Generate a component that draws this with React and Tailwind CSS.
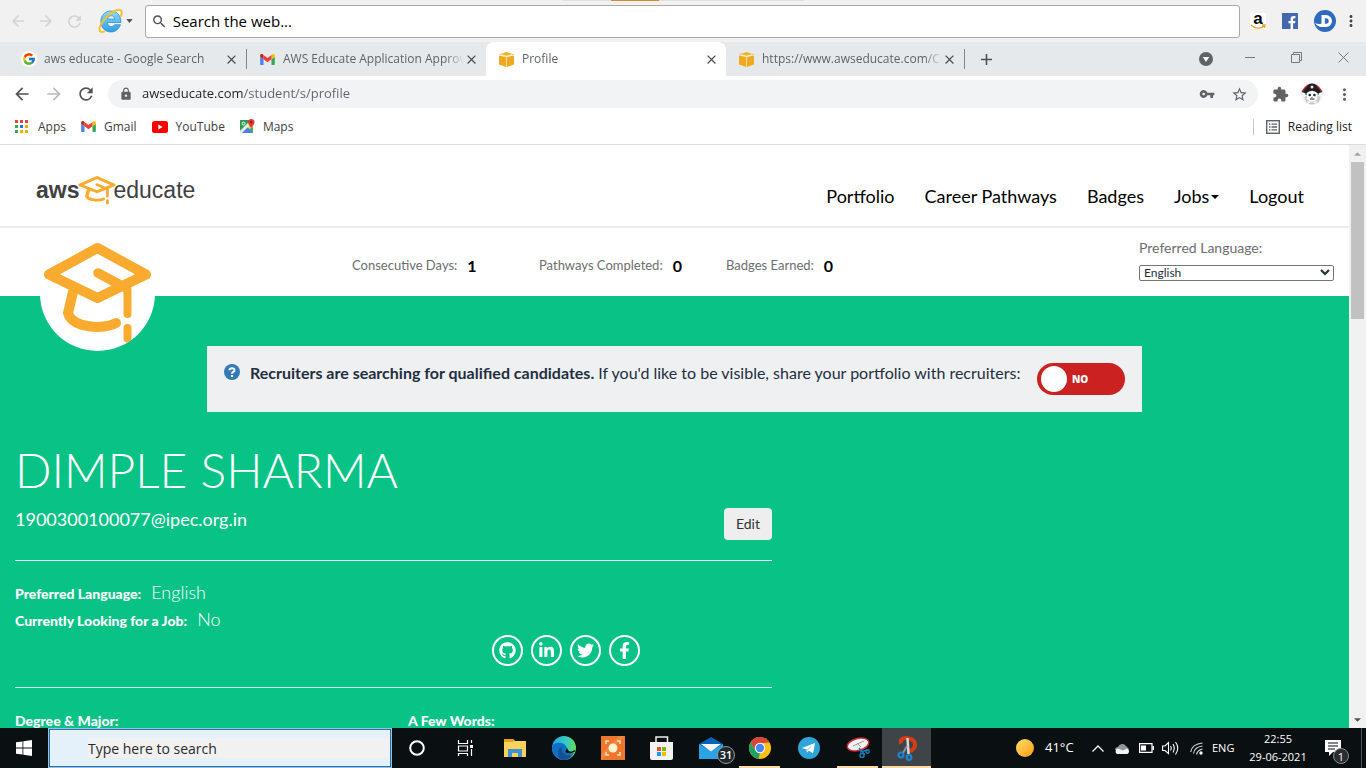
import React from "react";
import { FcGoogle } from "react-icons/fc";
import { FaGithub, FaLinkedinIn, FaTwitter, FaFacebookF } from "react-icons/fa";
import {
  MdArrowBack, MdArrowForward, MdRefresh, MdLock, MdVpnKey, MdStarBorder,
  MdExtension, MdMoreVert, MdSearch, MdClose, MdAdd,
} from "react-icons/md";

const UI = "font-['Open_Sans','Noto_Sans',sans-serif]";
const LATO = "font-['Lato',sans-serif]";

function CapIcon({ className }) {
  return (
    <svg viewBox="0 0 115 115" preserveAspectRatio="none" className={className} fill="none" stroke="#f9ab30" strokeLinecap="round" strokeLinejoin="round" aria-hidden="true">
      <path d="M57.500 12 L9 38.500 L57.500 62 L106 38.500 Z" strokeWidth="10" />
      <path d="M58 37 L86 52" strokeWidth="9.500" />
      <path d="M33 56 L28 77 C32 92 64 94 76 87" strokeWidth="10" />
      <path d="M87.500 54 V78 M87.500 92 V102.500" strokeWidth="8" />
    </svg>
  );
}

function GmailIcon({ className }) {
  return (
    <svg viewBox="0 0 24 18" className={className} aria-hidden="true">
      <path d="M1.600 18H5.500V8.700L0 4.600V16.400C0 17.300.7 18 1.600 18Z" fill="#4285f4" />
      <path d="M18.500 18H22.400C23.300 18 24 17.300 24 16.400V4.600L18.500 8.700Z" fill="#34a853" />
      <path d="M18.500 1.700V8.700L24 4.600V2.400C24 .4 21.700-.8 20.100.4Z" fill="#fbbc04" />
      <path d="M5.500 8.700V1.700L12 6.500L18.500 1.700V8.700L12 13.600Z" fill="#ea4335" />
      <path d="M0 2.400V4.600L5.500 8.700V1.700L3.900.4C2.300-.8 0 .4 0 2.400Z" fill="#c5221f" />
    </svg>
  );
}

function CubeIcon() {
  return (
    <svg viewBox="0 0 15 15" className="size-[15px] shrink-0" aria-hidden="true">
      <path d="M0 2.500 L7.500 0 L15 2.500 L7.500 4.500Z" fill="#f5b11d" />
      <path d="M0 3.500 L7 5 V15 L0 12.500Z M15 3.500 L8 5 V15 L15 12.500Z" fill="#f2a922" />
      <path d="M7 5H8V15H7Z" fill="#f9dc9f" />
      <path d="M2 2.700 L7.500 4.200 L13 2.700" stroke="#fff" strokeWidth=".8" fill="none" />
    </svg>
  );
}

function InternetExplorerIcon() {
  return (
    <svg viewBox="0 0 26 26" className="size-[26px]" aria-hidden="true">
      <defs>
        <linearGradient id="ie" x1="0" y1="0" x2="0" y2="1">
          <stop offset="0" stopColor="#8bdcf8" /><stop offset="1" stopColor="#2f9fe0" />
        </linearGradient>
      </defs>
      <path d="M13 3C18.500 3 23 7 23 14.500H9.500C9.700 17 11 18.500 13.200 18.500C14.800 18.500 16 17.800 16.600 16.700H22.500C21 21 17.500 24 13 24C7 24 2.800 19.500 2.800 13.500C2.800 7.500 7 3 13 3ZM9.600 11H16.700C16.500 9 15.200 7.800 13.200 7.800C11.200 7.800 9.900 9 9.600 11Z" fill="url(#ie)" stroke="#2a86c4" strokeWidth=".7" />
      <path d="M23 8C24.500 4 23.500 1.300 20.500 1.800C15 2.500 5 11 2 18.500C.5 22.500 2.300 25 6 23.600" fill="none" stroke="#f1c232" strokeWidth="2" strokeLinecap="round" />
    </svg>
  );
}

function Tab({ icon, label, active, divider }) {
  return (
    <div className={active
      ? "flex h-full w-[240px] min-w-0 items-center rounded-[8px] rounded-b-none bg-white pl-[13px]"
      : "flex h-full w-[239px] min-w-0 items-center pl-[13px]"}>
      <span className="flex w-[15px] shrink-0 justify-center">{icon}</span>
      <span className="ml-2 min-w-0 flex-1 overflow-hidden [mask-image:linear-gradient(90deg,#000_90%,transparent)] text-[12px] whitespace-nowrap text-[#5f6368]">{label}</span>
      <button aria-label={"Close " + label} className="mr-[7px] text-[#4d5156]"><MdClose size={15} /></button>
      {divider && <span className="h-5 w-px bg-[#80868b]" />}
    </div>
  );
}

function BrowserChrome() {
  return (
    <div className={"shrink-0 " + UI}>
      <div className="relative flex h-[42px] items-center bg-[#f1f1f1] pr-[6px] pl-[9px]">
        <div className="absolute top-0 left-[563px] flex h-px w-[241px] bg-[#e0e0e0]"><span className="ml-12 w-12 bg-[#d08d36]" /></div>
        <button aria-label="Back" className="text-[#d2d2d2]"><MdArrowBack size={18} /></button>
        <button aria-label="Forward" className="ml-[10px] text-[#d2d2d2]"><MdArrowForward size={18} /></button>
        <button aria-label="Refresh" className="ml-[10px] text-[#d2d2d2]"><MdRefresh size={19} /></button>
        <button aria-label="Choose browser" className="ml-[14px] flex items-center">
          <InternetExplorerIcon />
          <svg viewBox="0 0 8 5" className="ml-[2px] h-1 w-[7px]" aria-hidden="true"><path d="M0 0H8L4 5Z" fill="#555" /></svg>
        </button>
        <label className="ml-3 flex h-[33px] min-w-0 flex-1 items-center rounded-[3px] border border-[#a9a9a9] bg-white pl-[5px]">
          <MdSearch size={17} className="text-[#555]" />
          <input aria-label="Search the web" placeholder="Search the web..." className="ml-1 w-full pl-px text-[15px] outline-none placeholder:text-black" />
        </label>
        <button aria-label="Amazon" className="relative ml-[10px] flex size-4 items-center justify-center bg-white font-['Liberation_Sans',sans-serif] text-[17px] leading-4 font-bold text-black">
          <span className="pb-1">a</span>
          <svg viewBox="0 0 16 5" className="absolute bottom-0 left-0 h-[5px] w-4" aria-hidden="true"><path d="M1 1C5 5 11 5 14 2M12 1L15 1L14.500 4" fill="none" stroke="#f79a1f" strokeWidth="1.300" /></svg>
        </button>
        <button aria-label="Facebook" className="ml-4 flex size-4 items-end justify-center bg-[#4468ae] pl-1 text-white"><FaFacebookF size={13} /></button>
        <button aria-label="Dashlane" className="ml-4">
          <svg viewBox="0 0 22 22" className="size-[22px]" aria-hidden="true">
            <circle cx="11" cy="11" r="11" fill="#2f6abf" />
            <path d="M7.500 5H12A6 6 0 0 1 12 17H7.500C5 17 2.500 15.500 .8 12.800C3 14.300 5.500 14.500 7.500 13.500ZM10.800 8.300V13.700H12A2.700 2.700 0 0 0 12 8.300Z" fill="#fff" fillRule="evenodd" />
          </svg>
        </button>
        <button aria-label="Menu" className="ml-[6px] text-[#444]"><MdMoreVert size={18} /></button>
      </div>

      <div className="flex h-[34px] items-center bg-[#e6e9ec] pl-2">
        <Tab icon={<span className="rounded-full bg-white p-px"><FcGoogle size={14} /></span>} label="aws educate - Google Search" divider />
        <Tab icon={<GmailIcon className="h-[11px] w-[15px]" />} label="AWS Educate Application Approv" />
        <Tab icon={<CubeIcon />} label="Profile" active />
        <Tab icon={<CubeIcon />} label="https://www.awseducate.com/Co" divider />
        <button aria-label="New tab" className="ml-3 text-[#4d5156]"><MdAdd size={19} /></button>
        <button aria-label="Search tabs" className="ml-auto">
          <svg viewBox="0 0 14 14" className="size-[14px]" aria-hidden="true"><circle cx="7" cy="7" r="7" fill="#5f6368" /><path d="M3.800 5H10.200L7 10Z" fill="#fff" /></svg>
        </button>
        <button aria-label="Minimize" className="ml-8 pb-1"><svg viewBox="0 0 10 10" className="size-[10px]" aria-hidden="true"><path d="M0 5.500H10" stroke="#777" /></svg></button>
        <button aria-label="Restore" className="ml-9 pb-1"><svg viewBox="0 0 11 11" className="size-[11px]" fill="none" stroke="#777" aria-hidden="true"><path d="M.5 2.500H8.500V10.500H.5ZM2.500 2.500V.5H10.500V8.500H8.500" /></svg></button>
        <button aria-label="Close window" className="mr-[17px] ml-9 pb-1"><svg viewBox="0 0 11 11" className="size-[11px]" stroke="#777" aria-hidden="true"><path d="M.5.500L10.500 10.500M10.500.500L.5 10.500" /></svg></button>
      </div>

      <div className="flex h-9 items-center bg-white pr-3 pl-3">
        <button aria-label="Go back" className="text-[#505458]"><MdArrowBack size={20} /></button>
        <button aria-label="Go forward" className="ml-3 text-[#b9bbbd]"><MdArrowForward size={20} /></button>
        <button aria-label="Reload" className="ml-3 text-[#505458]"><MdRefresh size={20} /></button>
        <div className="ml-3 flex h-7 min-w-0 flex-1 items-center rounded-full bg-[#f1f3f4] pr-[10px] pl-[11px]">
          <MdLock size={14} className="shrink-0 text-[#5f6368]" />
          <input aria-label="Address" defaultValue="awseducate.com/student/s/profile" className="ml-[9px] min-w-0 flex-1 bg-[linear-gradient(90deg,#202124_101px,#5f6368_101px)] bg-clip-text text-[13px] text-transparent outline-none" />
          <button aria-label="Passwords" className="text-[#5f6368]"><MdVpnKey size={16} /></button>
          <button aria-label="Bookmark" className="ml-4 text-[#5f6368]"><MdStarBorder size={17} /></button>
        </div>
        <button aria-label="Extensions" className="ml-[14px] text-[#5f6368]"><MdExtension size={17} /></button>
        <button aria-label="Account" className="ml-3">
          <svg viewBox="0 0 22 22" className="size-[22px]" aria-hidden="true">
            <circle cx="11" cy="11" r="11" fill="#f4f5f6" />
            <path d="M3 14L7 12H16L19.500 14L18 19Q11 24 5 19Z" fill="#c9ccd4" />
            <path d="M6 15L16 20M16 15L6 20" stroke="#eef0f5" strokeWidth="2" />
            <path d="M4 8H18V12H4Z" fill="#39a9c9" />
            <path d="M6 8H16.500V14L14.500 18H8L6 14Z" fill="#fff" />
            <path d="M1 9Q6 0 11 .5Q16 0 21 9L17 10.500Q11 5 5 10.500Z" fill="#251c20" />
            <path d="M1 9Q4 4 7 2M21 9Q18 4 15 2" stroke="#a82b2b" strokeWidth="1.500" fill="none" />
            <circle cx="11" cy="4" r="1.500" fill="#e7e7ea" />
            <circle cx="8.800" cy="12" r="1.300" fill="#222" /><circle cx="13.400" cy="12" r="1.300" fill="#222" />
            <path d="M9 16H13.500M11 14V14.800" stroke="#222" />
          </svg>
        </button>
        <button aria-label="Browser menu" className="ml-3 text-[#5f6368]"><MdMoreVert size={19} /></button>
      </div>

      <nav className="flex h-[33px] items-center border-b border-[#dadce0] bg-white pr-[14px] pb-[3px] pl-[15px] text-[12px] text-[#3c4043]">
        <a href="#apps" className="flex items-center gap-[10px]">
          <svg viewBox="0 0 13 13" className="size-[13px]" aria-hidden="true">
            <path d="M0 0H3V3H0ZM5 0H8V3H5ZM10 0H13V3H10Z" fill="#ea4335" />
            <path d="M0 5H3V8H0Z M0 10H3V13H0Z" fill="#34a853" /><path d="M5 5H8V8H5Z" fill="#1a73e8" />
            <path d="M10 5H13V8H10ZM5 10H8V13H5ZM10 10H13V13H10Z" fill="#f9ab00" />
          </svg>Apps
        </a>
        <a href="#gmail" className="ml-[15px] flex items-center gap-2"><GmailIcon className="h-[11px] w-[15px]" />Gmail</a>
        <a href="#youtube" className="ml-[15px] flex items-center gap-2">
          <svg viewBox="0 0 16 12" className="h-3 w-4" aria-hidden="true"><rect width="16" height="12" rx="2.500" fill="#f00" /><path d="M6.300 3.500V8.500L10.700 6Z" fill="#fff" /></svg>YouTube
        </a>
        <a href="#maps" className="ml-[15px] flex items-center gap-2">
          <svg viewBox="0 0 15 15" className="size-[15px]" aria-hidden="true">
            <rect y="1" width="13" height="13" rx="1" fill="#4cae57" /><path d="M1 14L7 8L13 14Z" fill="#4a80e8" /><path d="M7 8L13 2V8L9.500 10Z" fill="#f3d25d" /><path d="M0 12L10 2L13 3L2 14H0Z" fill="#e9ebee" />
            <path d="M0 2Q0 1 1 1H10L0 11Z" fill="#2a9a55" /><path d="M2.500 14L7.500 9L12.500 14Z" fill="#4a80e8" />
            <circle cx="3.500" cy="4.500" r="1.500" fill="none" stroke="#fff" />
            <path d="M11.200 0A3.300 3.300 0 0 1 14.500 3.300C14.500 5.500 11.200 9 11.200 9C11.200 9 8 5.500 8 3.300A3.200 3.200 0 0 1 11.200 0Z" fill="#dc4034" /><circle cx="11.200" cy="3.200" r="1.100" fill="#7b1d15" />
          </svg>Maps
        </a>
        <button className="ml-auto flex items-center gap-2 text-[#202124]">
          <span className="mr-1 h-4 w-px bg-[#c4c6c9]" />
          <svg viewBox="0 0 14 14" className="size-[14px]" fill="none" stroke="#5f6368" aria-hidden="true"><rect x=".7" y=".7" width="12.600" height="12.600" strokeWidth="1.400" /><path d="M3 4.200H4.500M5.500 4.200H11M3 7H4.500M5.500 7H11M3 9.800H4.500M5.500 9.800H11" strokeWidth="1.300" /></svg>
          Reading list
        </button>
      </nav>
    </div>
  );
}

function Stat({ label, value }) {
  return (
    <div className="flex w-[187px] items-center text-[13px] text-[#6d6e70]">
      {label}<span className="ml-[10px] text-[16px] font-bold text-black">{value}</span>
    </div>
  );
}

const SOCIAL = [
  { name: "GitHub", Icon: FaGithub },
  { name: "LinkedIn", Icon: FaLinkedinIn },
  { name: "Twitter", Icon: FaTwitter },
  { name: "Facebook", Icon: FaFacebookF },
];

function ProfilePage() {
  return (
    <main className={"min-w-0 flex-1 overflow-hidden bg-[#09c285] " + LATO}>
      <header className="flex h-[83px] items-center justify-between border-b-2 border-[#ececec] bg-white pr-[45px] pl-9">
        <a href="#home" aria-label="aws educate" className="flex items-center pt-[10px] font-['Liberation_Sans',sans-serif] text-[23px] text-[#414042]">
          <span className="font-bold">aws</span>
          <CapIcon className="-mr-1 -ml-[2px] h-[33px] w-10" />
          <span>educate</span>
        </a>
        <nav className="flex items-center gap-[30px] pt-[22px] text-[18px] text-black">
          <a href="#portfolio">Portfolio</a>
          <a href="#career">Career Pathways</a>
          <a href="#badges">Badges</a>
          <button className="flex items-center gap-[2px]">Jobs<svg viewBox="0 0 8 4" className="h-1 w-2" aria-hidden="true"><path d="M0 0H8L4 4Z" /></svg></button>
          <a href="#logout">Logout</a>
        </nav>
      </header>

      <section className="relative flex h-[68px] bg-white pr-[15px]">
        <div className="absolute top-2 left-10 size-[115px] overflow-hidden rounded-full bg-white">
          <CapIcon className="size-[115px]" />
        </div>
        <div className="ml-[352px] flex pt-2">
          <Stat label="Consecutive Days:" value="1" />
          <Stat label="Pathways Completed:" value="0" />
          <Stat label="Badges Earned:" value="0" />
        </div>
        <div className="ml-auto flex w-[195px] flex-col pt-[10px]">
          <label htmlFor="lang" className="text-[14px] leading-5 text-[#6d6e70]">Preferred Language:</label>
          <span className="relative mt-[7px] block">
            <select id="lang" className="block h-4 w-full appearance-none rounded-[2px] border border-[#767676] bg-white pl-1 text-[12px] leading-3 text-[#232f3e]"><option>English</option></select>
            <svg viewBox="0 0 10 7" className="pointer-events-none absolute top-1 right-1 h-[7px] w-[10px]" aria-hidden="true"><path d="M1 1L5 5L9 1" fill="none" stroke="#232f3e" strokeWidth="2.200" /></svg>
          </span>
        </div>
      </section>

      <section className="mx-auto mt-[50px] flex h-[66px] w-[935px] max-w-full items-start bg-[#eff0f2] pt-[17px] pr-[17px] pl-[17px] text-[16px] text-[#232f3e]">
        <svg viewBox="0 0 16 16" className="mt-px size-4 shrink-0" aria-hidden="true"><circle cx="8" cy="8" r="8" fill="#337ab7" /><path d="M5.500 6.200C5.500 3.600 10.500 3.600 10.500 6.200C10.500 8 8 7.800 8 9.700M8 11V13" fill="none" stroke="#fff" strokeWidth="2" /></svg>
        <p className="ml-[10px] leading-5"><b>Recruiters are searching for qualified candidates.</b> If you'd like to be visible, share your portfolio with recruiters:</p>
        <button role="switch" aria-checked="false" aria-label="Share portfolio with recruiters" className="ml-auto flex h-8 w-[88px] items-center gap-[5px] rounded-full bg-[#cb2121] pl-1 font-['Open_Sans',sans-serif] text-[10px] font-extrabold text-white">
          <span className="size-[26px] rounded-full bg-white" />NO
        </button>
      </section>

      <section className="ml-[15px] w-[757px] max-w-full text-white">
        <h1 className="mt-[30px] text-[48px] leading-[55px] font-light">DIMPLE SHARMA</h1>
        <div className="flex h-16 items-start justify-between border-b border-[#eafff6]">
          <p className="pt-[10px] text-[18px] leading-6">1900300100077@ipec.org.in</p>
          <button className="mt-[11px] h-8 w-12 rounded-[4px] bg-[#eee] pb-px text-[14px] text-[#333]">Edit</button>
        </div>
        <dl className="pt-[18px] text-[18px] leading-[27px] font-light">
          <div className="flex h-[27px] items-baseline gap-[10px]"><dt className="text-[14px] font-black">Preferred Language:</dt><dd>English</dd></div>
          <div className="flex h-[27px] items-baseline gap-[10px]"><dt className="text-[14px] font-black">Currently Looking for a Job:</dt><dd>No</dd></div>
        </dl>
        <div className="flex h-[55px] items-start gap-2 border-b border-[#d3f7e9] pt-[2px] pl-[477px]">
          {SOCIAL.map(({ name, Icon }) => (
            <a key={name} href={"#" + name} aria-label={name} className="flex size-[31px] items-center justify-center rounded-full border-2 border-white"><Icon size={17} /></a>
          ))}
        </div>
        <div className="flex pt-[23px] text-[14px] leading-5 font-black">
          <h2 className="w-[393px]">Degree &amp; Major:</h2>
          <h2>A Few Words:</h2>
        </div>
      </section>
    </main>
  );
}

function TaskButton({ label, open, active, children }) {
  return (
    <button aria-label={label} className={active ? "relative flex h-10 w-[49px] items-center justify-center bg-[#3f4448]" : "relative flex h-10 w-[49px] items-center justify-center"}>
      {children}
      {(open || active) && <span className={active ? "absolute inset-x-0 bottom-0 h-[2px] bg-[#fbd9a7]" : "absolute inset-x-1 bottom-0 h-[2px] bg-[#fbd9a7]"} />}
    </button>
  );
}

function Taskbar() {
  return (
    <footer className={"flex h-10 shrink-0 items-center bg-[#0a0f12] text-white " + UI}>
      <button aria-label="Start" className="flex h-10 w-12 items-center justify-center">
        <svg viewBox="0 0 16 16" className="size-4" fill="#fff" aria-hidden="true"><path d="M0 2.300L6.500 1.400V7.600H0ZM7.300 1.300L16 0V7.600H7.300ZM0 8.400H6.500V14.600L0 13.700ZM7.300 8.400H16V16L7.300 14.700Z" /></svg>
      </button>
      <div className="flex h-10 w-[344px] items-center border border-[#b9b9b9]">
        <div className="flex h-full w-full items-center border border-[#0078d7] bg-[#e4f1fb] pl-[38px]">
          <input aria-label="Type here to search" placeholder="Type here to search" className="h-5 w-full bg-[#f1f1f1] text-[14px] outline-none placeholder:text-[#2b2b2b]" />
        </div>
      </div>
      <TaskButton label="Cortana"><svg viewBox="0 0 16 16" className="size-4" aria-hidden="true"><circle cx="8" cy="8" r="6.800" fill="none" stroke="#fff" strokeWidth="2" /></svg></TaskButton>
      <TaskButton label="Task view"><svg viewBox="0 0 17 16" className="h-4 w-[17px]" fill="none" stroke="#fff" aria-hidden="true"><path d="M1.500 0V3.500H10.500V0M1.500 16V13.500H10.500V16M1.500 6H10.500V11H1.500ZM14.500 0V3M14.500 9V16" strokeWidth="1.200" /><path d="M13 5H16V8H13Z" fill="#fff" stroke="none" /></svg></TaskButton>
      <TaskButton label="File Explorer"><svg viewBox="0 0 22 18" className="h-[18px] w-[22px]" aria-hidden="true"><path d="M0 0H9L11 2H22V18H0Z" fill="#fbd15c" /><path d="M0 0H9L10.500 2L9 3H0Z" fill="#e5a318" /><path d="M4 18V10H18V18H14V14H8V18Z" fill="#3d92d3" /></svg></TaskButton>
      <TaskButton label="Edge">
        <svg viewBox="0 0 24 24" className="size-6" aria-hidden="true">
          <defs><linearGradient id="edge" x1="0" x2="1"><stop offset="0" stopColor="#1fa6ec" /><stop offset=".6" stopColor="#38cbc2" /><stop offset="1" stopColor="#66dc55" /></linearGradient></defs>
          <circle cx="12" cy="12" r="12" fill="url(#edge)" />
          <path d="M0 12C0 6 11 5 14 10C15.500 13 12 14 13.500 16C15 18 20 18 22 16.500C19 23 13 25 9 23.600C3 22 0 17 0 12Z" fill="#0f6fc5" />
          <path d="M9 23.600C4 19 6 12 10 10.500C9 15 12 21 20 19.500C17 23.500 13 24.500 9 23.600Z" fill="#174f93" />
          <path d="M14 10C16 13 12.500 14 13.500 16C15 18.500 21 17.500 23.500 15L22 14C21 15.500 19 16 17 15C15.500 14.500 15.500 12 14 10Z" fill="#0b1013" />
        </svg>
      </TaskButton>
      <TaskButton label="Screen recorder"><svg viewBox="0 0 24 24" className="size-6" fill="none" aria-hidden="true"><path d="M0 0H24V24H0Z" fill="#ee762d" /><path d="M0 18L18 0H24L0 24Z" fill="#f39455" opacity=".5" /><path d="M5 8V5H8M16 5H19V8M19 16V19H16M8 19H5V16" stroke="#ffe2b9" strokeWidth="1.500" /><circle cx="12" cy="12" r="4.500" fill="#fff3cb" /></svg></TaskButton>
      <TaskButton label="Microsoft Store"><svg viewBox="0 0 23 24" className="h-6 w-[23px]" aria-hidden="true"><path d="M6 8V1H17.500V8" fill="none" stroke="#eee" strokeWidth="1.500" /><path d="M0 6H23V22Q23 24 21 24H2Q0 24 0 22Z" fill="#f3f3f3" /><path d="M7 11H11V15H7Z" fill="#f25022" /><path d="M12 11H16V15H12Z" fill="#7fba00" /><path d="M7 16H11V20H7Z" fill="#00a4ef" /><path d="M12 16H16V20H12Z" fill="#ffb900" /></svg></TaskButton>
      <TaskButton label="Mail">
        <svg viewBox="0 0 24 22" className="h-[22px] w-6" aria-hidden="true"><path d="M0 7L12 0L24 7V22H0Z" fill="#0a63b5" /><path d="M0 7L12 14L24 7V22H0Z" fill="#2aa4e5" /><path d="M2 7H22L12 14.500Z" fill="#f2f6fa" /></svg>
        <span className="absolute right-0 bottom-1 flex size-[18px] items-center justify-center rounded-full border border-[#999] bg-[#20282e] text-[11px] font-semibold">31</span>
      </TaskButton>
      <TaskButton label="Chrome" open><svg viewBox="0 0 22 22" className="size-[22px]" aria-hidden="true"><circle cx="11" cy="11" r="11" fill="#fbc116" /><path d="M1.500 5.500A11 11 0 0 1 20.500 5.500L11 6L6.700 13.500Z" fill="#db4437" /><path d="M1.500 5.500L6.700 13.500L11 16L9.500 21.900A11 11 0 0 1 1.500 5.500Z" fill="#1da261" /><circle cx="11" cy="11" r="5.200" fill="#fff" /><circle cx="11" cy="11" r="4.200" fill="#4687f4" /></svg></TaskButton>
      <TaskButton label="Telegram"><svg viewBox="0 0 22 22" className="size-[22px]" aria-hidden="true"><circle cx="11" cy="11" r="11" fill="#2fa4db" /><path d="M4 11L17 6L15 16.500L11 13.800L9 15.500L8.500 12.500Z" fill="#fff" /><path d="M8.500 12.500L15 8L10 13L9 15.500Z" fill="#b6dcf0" /></svg></TaskButton>
      <TaskButton label="Snip and Sketch" open><svg viewBox="0 0 24 22" className="h-[22px] w-6" fill="none" aria-hidden="true"><ellipse cx="12" cy="7.500" rx="11" ry="6" transform="rotate(-15 12 7.500)" fill="#f1f1f1" stroke="#c92f31" strokeWidth="1.500" /><path d="M7 9L18 4M11 6L15 10" stroke="#999" /><path d="M13 11L19 18M22 13L14 15" stroke="#1d78bb" strokeWidth="1.500" /><circle cx="16" cy="18.500" r="2" stroke="#1d78bb" strokeWidth="1.500" /><circle cx="21.500" cy="14.500" r="1.700" stroke="#1d78bb" strokeWidth="1.500" /></svg></TaskButton>
      <TaskButton label="Snipping Tool" active><svg viewBox="0 0 20 25" className="h-[25px] w-5" fill="none" aria-hidden="true"><path d="M4.500 7.500C1.500 2.500 8 1.500 12 2.500C19 4 20 11 14.500 14.500L11 15.500" stroke="#d63b13" strokeWidth="4" /><path d="M10.500 2L11.500 18" stroke="#d5d8da" strokeWidth="2.500" /><path d="M10 10L6 17" stroke="#8f959a" strokeWidth="2" /><circle cx="4" cy="19" r="2.500" stroke="#2183d0" strokeWidth="2.200" /><circle cx="12" cy="21.500" r="2.300" stroke="#2183d0" strokeWidth="2.200" /></svg></TaskButton>

      <div className="ml-auto flex items-center">
        <svg viewBox="0 0 18 18" className="size-[18px]" aria-hidden="true"><defs><linearGradient id="sun" x1="0" y1="0" x2="1" y2="1"><stop offset="0" stopColor="#ffe06a" /><stop offset="1" stopColor="#ff9a14" /></linearGradient></defs><circle cx="9" cy="9" r="9" fill="url(#sun)" /></svg>
        <span className="ml-[11px] w-[30px] text-[13px] whitespace-nowrap">41°C</span>
        <svg viewBox="0 0 12 7" className="ml-[17px] h-[7px] w-3" fill="none" stroke="#fff" strokeWidth="1.400" aria-hidden="true"><path d="M.5 6.500L6 1L11.500 6.500" /></svg>
        <svg viewBox="0 0 16 11" className="ml-[10px] h-[11px] w-4" aria-hidden="true"><path d="M1 7A3 3 0 0 1 4 4A4.500 4.500 0 0 1 12 3L15 6L10 9Z" fill="#929699" /><path d="M3 11A3 3 0 0 1 4 5.500L9 7.500L13 5.500A3 3 0 0 1 13.500 11Z" fill="#f4f4f4" /></svg>
        <svg viewBox="0 0 15 10" className="ml-[9px] h-[10px] w-[15px]" aria-hidden="true"><path d="M.6.600H13V9.400H.6Z" fill="none" stroke="#fff" strokeWidth="1.200" /><path d="M2 2.500H7V7.500H2ZM13.500 3H15V7H13.500Z" fill="#fff" /></svg>
        <svg viewBox="0 0 17 14" className="ml-2 h-[14px] w-[17px]" fill="none" stroke="#fff" strokeWidth="1.100" aria-hidden="true"><path d="M.6 5V9.500H3L6.500 12.500V1.500L3 5ZM8.500 5Q10 7 8.500 9.500M11 3Q13.500 7 11 11.500M13.500 1Q18 7 13.500 13.500" /></svg>
        <svg viewBox="0 0 13 13" className="ml-[11px] size-[13px]" fill="none" stroke="#d5d5d5" strokeWidth="1.200" aria-hidden="true"><path d="M.7 10Q2 2 12.500 1M3.500 11.500Q4.500 5 12.500 4M6.500 12.500Q7.500 8 12.500 7" /><circle cx="11" cy="11" r="1.700" fill="#fff" stroke="none" /></svg>
        <span className="ml-[9px] w-[25px] text-[11px]">ENG</span>
        <div className="ml-3 w-[58px] text-center text-[11px] leading-[18px] whitespace-nowrap"><div>22:55</div><div>29-06-2021</div></div>
        <button aria-label="Notifications" className="relative ml-[18px] h-6 w-6">
          <svg viewBox="0 0 16 16" className="absolute top-1 left-0 size-4" aria-hidden="true"><path d="M0 0H16V12H8L4 16V12H0Z" fill="#fff" /><path d="M3 3H13M3 6H13M3 9H10" stroke="#0a0f12" strokeWidth="1.200" /></svg>
          <span className="absolute right-0 -bottom-1 flex size-4 items-center justify-center rounded-full border border-[#888] bg-[#2b2e31] text-[11px] leading-none">1</span>
        </button>
        <span className="mr-1 ml-3 h-10 w-px bg-[#4e5255]" />
      </div>
    </footer>
  );
}

export default function App() {
  return (
    <div className="flex h-screen flex-col overflow-hidden bg-white">
      <BrowserChrome />
      <div className="flex min-h-0 flex-1">
        <ProfilePage />
        <div className="flex w-[17px] shrink-0 flex-col items-center bg-[#f1f1f1]" aria-hidden="true">
          <span className="flex h-[17px] items-center"><svg viewBox="0 0 8 4" className="h-1 w-[7px]"><path d="M0 4H8L4 0Z" fill="#a3a3a3" /></svg></span>
          <span className="h-[157px] w-[13px] bg-[#c1c1c1]" />
          <span className="mt-auto flex h-[17px] items-center"><svg viewBox="0 0 8 4" className="h-1 w-[7px]"><path d="M0 0H8L4 4Z" fill="#505050" /></svg></span>
        </div>
      </div>
      <Taskbar />
    </div>
  );
}
